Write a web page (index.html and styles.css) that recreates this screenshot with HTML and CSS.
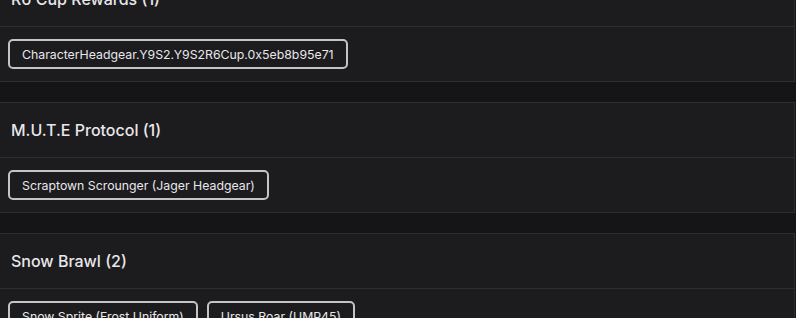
FILE: index.html
```html
<!DOCTYPE html>
<html lang="en">
<head>
    <meta charset="UTF-8">
    <meta name="viewport" content="width=device-width, initial-scale=1.0">
    <title>Event Rewards</title>
    <link rel="stylesheet" href="styles.css">
</head>
<body>
    <div class="event-list">
        <div class="event-card">
            <div class="event-header">
                <h2>R6 Cup Rewards (1)</h2>
            </div>
            <div class="event-items">
                <span class="item-tag">CharacterHeadgear.Y9S2.Y9S2R6Cup.0x5eb8b95e71</span>
            </div>
        </div>

        <div class="event-card">
            <div class="event-header">
                <h2>M.U.T.E Protocol (1)</h2>
            </div>
            <div class="event-items">
                <span class="item-tag">Scraptown Scrounger (Jager Headgear)</span>
            </div>
        </div>

        <div class="event-card">
            <div class="event-header">
                <h2>Snow Brawl (2)</h2>
            </div>
            <div class="event-items">
                <span class="item-tag">Snow Sprite (Frost Uniform)</span>
                <span class="item-tag">Ursus Roar (UMP45)</span>
            </div>
        </div>
    </div>
</body>
</html>
```

FILE: styles.css
```css
:root {
    --page-bg: #151417;
    --card-bg: #1c1b1e;
    --card-border: #2e2d31;
    --text: #e8e7ea;
    --tag-border: #c4c3c7;
}

* {
    margin: 0;
    padding: 0;
    box-sizing: border-box;
}

body {
    font-family: 'Inter', 'DejaVu Sans', sans-serif;
    background: var(--page-bg);
    color: var(--text);
    overflow: hidden;
}

.event-list {
    display: flex;
    flex-direction: column;
    gap: 20px;
    margin: -29px 1px 0 -1px;
}

.event-card {
    background: var(--card-bg);
    border: 1px solid var(--card-border);
}

.event-header {
    height: 55px;
    display: flex;
    align-items: center;
    padding-left: 11px;
    border-bottom: 1px solid var(--card-border);
}

.event-header h2 {
    font-size: 16px;
    font-weight: 500;
}

.event-items {
    display: flex;
    flex-wrap: wrap;
    gap: 9px;
    padding: 12px 8px;
    min-height: 54px;
}

.item-tag {
    display: inline-flex;
    align-items: center;
    height: 30px;
    padding: 0 12px;
    border: 2px solid var(--tag-border);
    border-radius: 5px;
    font-size: 12.3px;
}
```
